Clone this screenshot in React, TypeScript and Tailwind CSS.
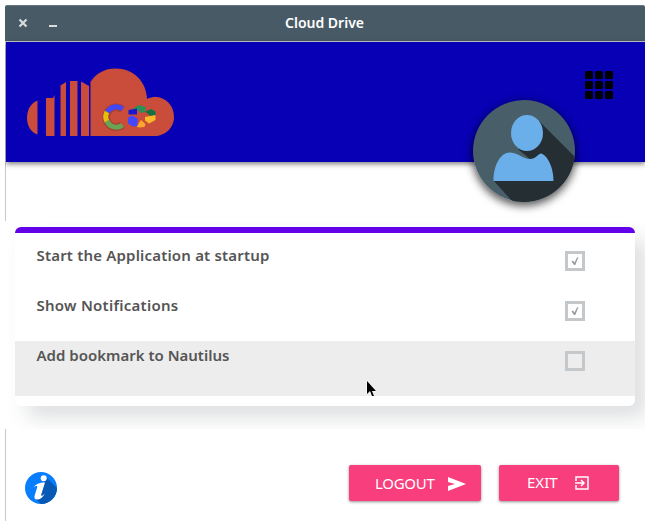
import React from "react";

const font = "font-['Noto_Sans','Open_Sans',sans-serif]";

function TitleBar() {
  return (
    <header className="relative flex h-9 items-center justify-center rounded-t-[2px] border-t border-[#637780] bg-[#475a65] pb-0.5 pr-px">
      <div className="absolute left-3 top-0 flex h-9 items-center">
        <svg width="44" height="36" viewBox="0 0 44 36" fill="none" stroke="#d8dcde">
          <path d="M2.500 13.500 9.500 20.500M9.500 13.500 2.500 20.500" strokeWidth="2.200" />
          <path d="M32 20h8" strokeWidth="2" />
        </svg>
      </div>
      <h1 className="text-[14px] font-semibold leading-none text-white">Cloud Drive</h1>
    </header>
  );
}

function CloudLogo() {
  return (
    <svg width="156" height="72" viewBox="20 66 156 72" className="block">
      <g fill="#ca4c3b">
        <path d="M37.500 100.500c-14 5-14 30 0 34z" />
        <path d="M46 98h7l1.500-3v41H46z" />
        <path d="M60.500 85.500l5.500-3.500v54h-5.500z" />
        <path d="M70 81h7.500v55H70z" />
        <path d="M81 81.500l8 4.500v50h-8z" />
        <path d="M90.500 82c6-9 14-13.500 25-13.500 18 0 31 13 31.500 30.500 13-6 27 3 27 18 0 11-9 19-19.500 19h-64z" />
      </g>
      <g fill="none" strokeWidth="5">
        <path d="M122.500 109.500a10 10 0 1 0 0 15.500" stroke="#823630" strokeWidth="7.500" opacity=".5" />
        <path d="M107.500 112a10 10 0 0 1 15-3" stroke="#4347fb" />
        <path d="M107 121.500a10 10 0 0 1 0-9.500" stroke="#e7bd0b" />
        <path d="M107 121a10 10 0 0 0 15.500 4" stroke="#69a452" />
      </g>
      <path d="M133 108.500l6-3.500 7 2-1 5-4 1-3-3-5-1z" fill="#2c9158" />
      <path d="M145 111.500l6-2.500 4.500 2.500v5l-5-.5z" fill="#147242" />
      <path d="M145 117l10.500-2v5l-6.500 3.500-4-3z" fill="#ffb82a" />
      <path d="M136.500 126.500l4.500-6.500 4.500 4-1 3-5.500.5z" fill="#fca72b" />
      <path d="M128 117.500l4-2 5.500 3v7.500l-4.500.5-5-3z" fill="#4347ff" />
      <path d="M128.500 110l8.500-1.500v6h-8.500z" fill="#1818d0" />
    </svg>
  );
}

function Avatar() {
  return (
    <div className="absolute left-[467px] top-[58px] z-10 size-[102px] rounded-full shadow-[0_3px_9px_1px_rgba(0,0,0,0.65)]">
      <svg width="102" height="102" viewBox="0.5 0.5 102 102" className="block">
        <defs>
          <clipPath id="avatar"><circle cx="51.500" cy="51.500" r="51" /></clipPath>
        </defs>
        <g clipPath="url(#avatar)">
          <path d="M0 0h103v103H0z" fill="#485f69" />
          <path d="M67 22l36 36v45H41L21 81h39l-2-21-12-10z" fill="#242e33" />
          <ellipse cx="54.500" cy="33.500" rx="16" ry="18" fill="#6aaeea" />
          <path d="M21 81.500c0-17.500 8-28.500 16-28.500 8 0 14 6.500 20 6.500 7 0 9-6 12-5.500 7 3 12 15 12 27.500z" fill="#6aaeea" />
        </g>
      </svg>
    </div>
  );
}

function AppsIcon() {
  return (
    <svg width="28" height="28" viewBox="0 0 28 28" className="block">
      {[0, 10, 20].map((y) => [0, 10, 20].map((x) => <rect key={`${x}-${y}`} x={x} y={y} width="8" height="8" rx="1.500" />))}
    </svg>
  );
}

function CheckBox({ checked }: { checked: boolean }) {
  return (
    <span className="mt-1.5 flex size-5 shrink-0 items-center justify-center border-[3px] border-[#c4c8cb]">
      {checked && (
        <svg width="14" height="14" viewBox="0 0 14 14" fill="#999c9f">
          <path d="M3.500 7.500 5 6.500l1.500 2L9 3.500l1.500-.500L7.300 11H6z" />
        </svg>
      )}
    </span>
  );
}

const settings = [
  { label: "Start the Application at startup", checked: true, row: "h-[50px]", tracking: "tracking-[0.18px]" },
  { label: "Show Notifications", checked: true, row: "h-[50px]", tracking: "tracking-[0.26px]" },
  { label: "Add bookmark to Nautilus", checked: false, row: "h-[55px] bg-[#ededed]", tracking: "tracking-normal" },
];

function InfoIcon() {
  return (
    <svg width="32" height="32" viewBox="0 0 32 32" className="block">
      <defs><clipPath id="info"><circle cx="16" cy="16" r="16" /></clipPath></defs>
      <g clipPath="url(#info)">
        <path d="M0 0h32v32H0z" fill="#087eff" />
        <path d="M21 5l12 12v16H17l-6-6 8-16z" fill="#0759b3" />
      </g>
      <circle cx="18.700" cy="6.300" r="3" fill="#fff" />
      <path d="M8.500 15.500c2.500-3.300 5.500-5 11.500-5l-3.700 11.700c-.6 2.300.7 2.300 3.700-1-2.200 4.300-4.800 6.300-8 6.300-2.500 0-3-1.800-2.300-4.200l2.500-8c.5-1.700-1.200-1.600-3.700.2z" fill="#fff" />
    </svg>
  );
}

export default function App() {
  return (
    <div className={`h-[530px] w-[654px] bg-white pl-[5px] pt-[5px] ${font}`}>
      <div className="relative flex h-[516px] w-[640px] flex-col overflow-hidden">
        <TitleBar />
        <main className="relative flex flex-1 flex-col border-l border-t border-[#c8c9ce]">
          <section className="relative flex h-[120px] shrink-0 items-start justify-between bg-[#0700b5] pl-[14px] pr-8 shadow-[0_2px_5px_rgba(0,0,0,0.5)]">
            <div className="mt-6"><CloudLogo /></div>
            <div className="mt-[29px]"><AppsIcon /></div>
            <Avatar />
          </section>
          <section className="-ml-px mt-[59px] h-[208px] shrink-0 overflow-hidden bg-white px-2.5 pt-1.5">
            <div className="h-[179px] overflow-hidden rounded-md border-t-[6px] border-[#6200ea] bg-white pt-2 shadow-[12px_12px_20px_rgba(60,70,80,0.17)]">
              {settings.map((item) => (
                <div key={item.label} className={`flex items-start justify-between pl-[21.500px] pr-[50px] pt-1 ${item.row}`}>
                  <span className={`text-[15px] font-semibold leading-5 text-[#555] ${item.tracking}`}>{item.label}</span>
                  <CheckBox checked={item.checked} />
                </div>
              ))}
            </div>
          </section>
          <footer className="mt-9 flex items-start pl-[19px] pr-[26px]">
            <div className="mt-[7px]"><InfoIcon /></div>
            <button className="ml-auto flex h-9 w-[132px] items-center rounded-[2px] bg-[#f83e7c] pl-[26px] text-[15px] text-white shadow-[0_1px_3px_rgba(0,0,0,0.45)]">
              <span className="w-[73px] text-left tracking-[-0.300px]">LOGOUT</span>
              <svg width="18" height="14" viewBox="0 0 18 14" fill="white" className="mt-px"><path d="M0 0l18 7-18 7V9l7-2-7-2z" /></svg>
            </button>
            <button className="ml-[18px] flex h-9 w-[120px] items-center rounded-[2px] bg-[#f83e7c] pl-7 text-[15px] text-white shadow-[0_1px_3px_rgba(0,0,0,0.45)]">
              <span className="w-12 pb-0.5 text-left">EXIT</span>
              <svg width="14" height="14" viewBox="0 0 14 14" fill="none" stroke="white" strokeWidth="1.500"><path d="M1 5V1h12v12H1V9M0 7h9M6 4l3 3-3 3" /></svg>
            </button>
          </footer>
        </main>
        <svg width="12" height="17" viewBox="0 0 12 17" className="pointer-events-none absolute left-[361px] top-[375px]">
          <path d="M1 1v13l3-3 2 5h2l-2-5h4z" fill="#000" stroke="#fff" strokeWidth="1" paintOrder="stroke" />
        </svg>
      </div>
    </div>
  );
}
